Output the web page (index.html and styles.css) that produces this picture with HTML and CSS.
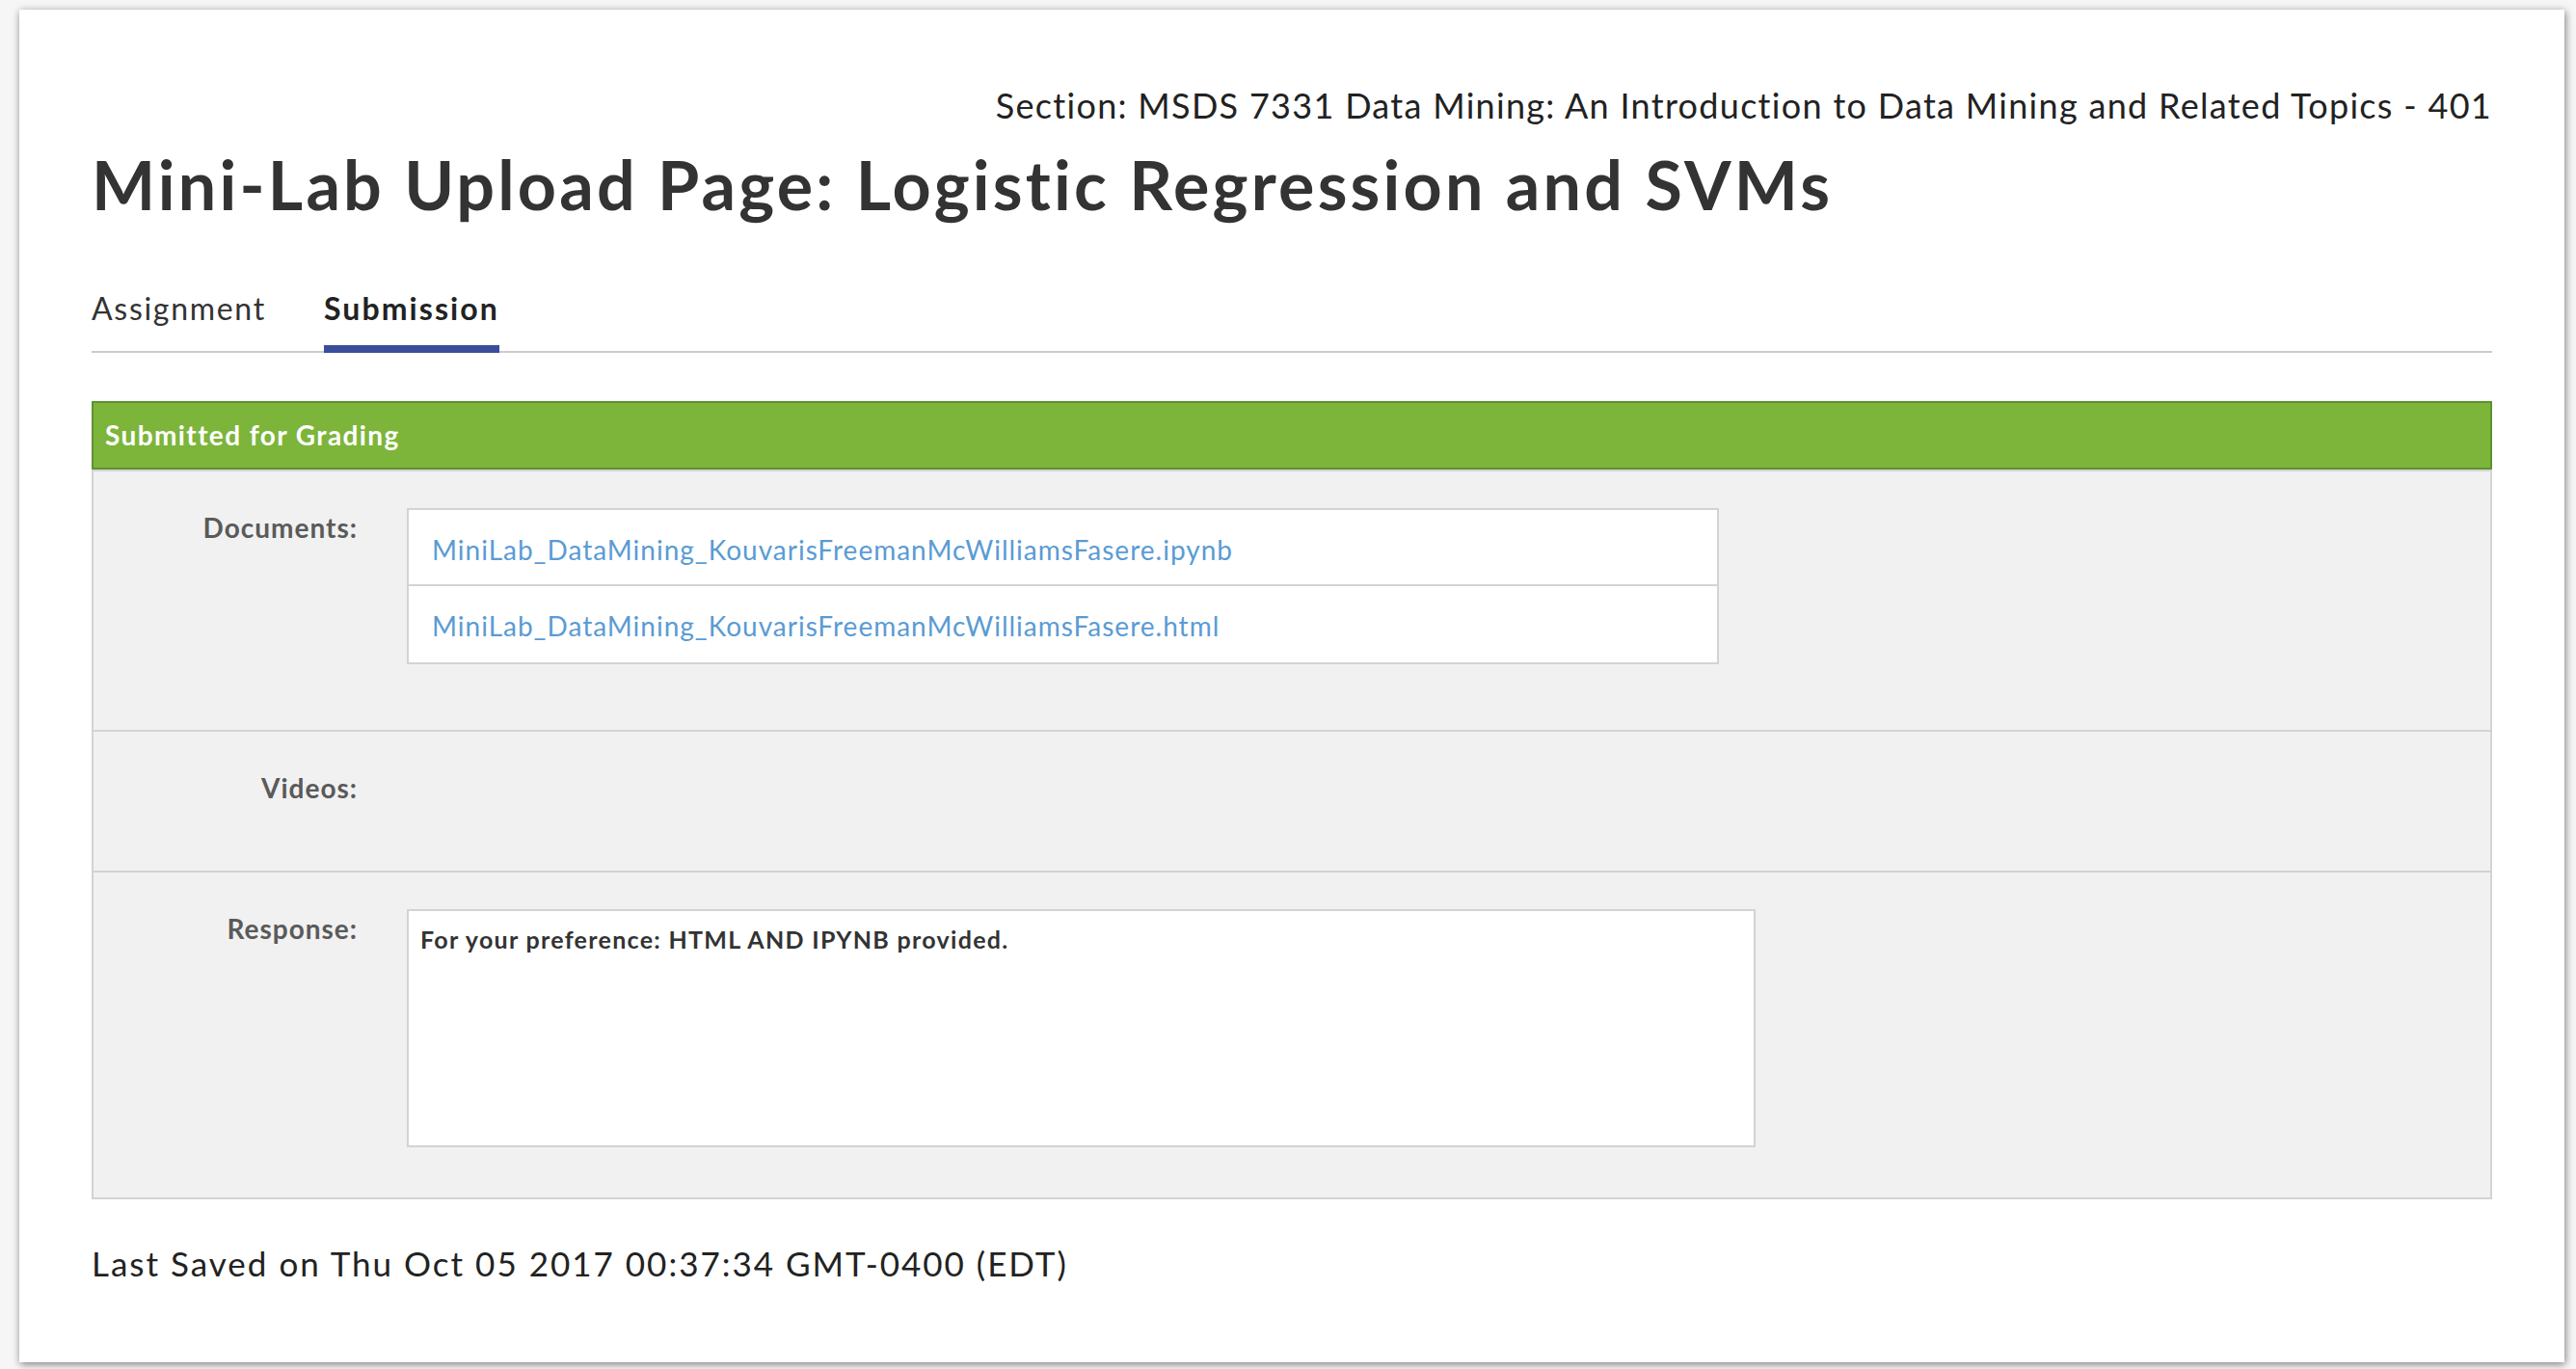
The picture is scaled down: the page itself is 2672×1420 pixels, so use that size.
FILE: index.html
```html
<!DOCTYPE html>
<html lang="en">
<head>
<meta charset="utf-8">
<title>Mini-Lab Upload Page</title>
<link rel="stylesheet" href="styles.css">
</head>
<body>
<div class="card">
  <div class="section-line">Section: MSDS 7331 Data Mining: An Introduction to Data Mining and Related Topics - 401</div>
  <h1 class="page-title">Mini-Lab Upload Page: Logistic Regression and SVMs</h1>
  <nav class="tabs">
    <span class="tab">Assignment</span>
    <span class="tab tab-active">Submission</span>
  </nav>
  <div class="status-panel">
    <div class="status-head">Submitted for Grading</div>
    <div class="status-body">
      <div class="row row-docs">
        <div class="row-label">Documents:</div>
        <div class="row-content">
          <ul class="doc-list">
            <li class="doc-item"><a class="doc-link" href="#">MiniLab_DataMining_KouvarisFreemanMcWilliamsFasere.ipynb</a></li>
            <li class="doc-item"><a class="doc-link" href="#">MiniLab_DataMining_KouvarisFreemanMcWilliamsFasere.html</a></li>
          </ul>
        </div>
      </div>
      <div class="row row-videos">
        <div class="row-label">Videos:</div>
        <div class="row-content"></div>
      </div>
      <div class="row row-response">
        <div class="row-label">Response:</div>
        <div class="row-content">
          <div class="response-box">For your preference: HTML AND IPYNB provided.</div>
        </div>
      </div>
    </div>
  </div>
  <div class="last-saved">Last Saved on Thu Oct 05 2017 00:37:34 GMT-0400 (EDT)</div>
</div>
</body>
</html>
```
FILE: styles.css
```css
html, body {
  margin: 0;
  padding: 0;
}
body {
  background: #f6f6f6;
  padding: 10px 12px 8px 20px;
  font-family: Lato, "Noto Sans", "Liberation Sans", sans-serif;
  color: #222;
}
.card {
  background: #fff;
  box-shadow: 1px 2px 8px rgba(0, 0, 0, 0.5);
  padding: 77px 75px 81px 75px;
}
.section-line {
  font-size: 36px;
  line-height: 44px;
  letter-spacing: 1.3px;
  text-align: right;
  color: #222;
}
.page-title {
  margin: 20px 0 0 0;
  font-size: 70px;
  line-height: 80px;
  letter-spacing: 3.2px;
  font-weight: 700;
  color: #333;
}
.tabs {
  margin-top: 69px;
  display: flex;
  gap: 60px;
  border-bottom: 2px solid #cccccc;
}
.tab {
  font-size: 32px;
  line-height: 40px;
  letter-spacing: 1.7px;
  color: #333;
  padding-bottom: 18px;
  border-bottom: 8px solid transparent;
  margin-bottom: -2px;
}
.tab-active {
  font-weight: 700;
  letter-spacing: 2.1px;
  color: #222;
  border-bottom-color: #3a4e9c;
}
.status-panel {
  margin-top: 50px;
}
.status-head {
  background: #7cb53a;
  border: 2px solid #5f9132;
  color: #fff;
  font-weight: 700;
  font-size: 28px;
  line-height: 67px;
  letter-spacing: 1.4px;
  padding-left: 12px;
}
.status-body {
  background: #f1f1f1;
  border: 2px solid #d3d3d3;
}
.row {
  display: grid;
  grid-template-columns: 274px 1fr;
  column-gap: 51px;
  padding-top: 38px;
  border-bottom: 2px solid #d3d3d3;
}
.row:last-child {
  border-bottom: none;
}
.row-docs { padding-bottom: 68px; }
.row-videos { padding-bottom: 66px; }
.row-response { padding-bottom: 52px; }
.row-label {
  text-align: right;
  font-size: 28px;
  line-height: 40px;
  letter-spacing: 1px;
  font-weight: 700;
  color: #5a5a5a;
}
.doc-list {
  list-style: none;
  margin: 0;
  padding: 0;
  width: 1357px;
  background: #fff;
  border: 2px solid #d3d3d3;
}
.doc-item {
  height: 79px;
  padding-left: 24px;
  box-sizing: border-box;
  padding-top: 4px;
  line-height: 74px;
  border-bottom: 2px solid #d3d3d3;
}
.doc-item:last-child {
  border-bottom: none;
}
.doc-link {
  font-size: 28px;
  letter-spacing: 1px;
  color: #5a9bd4;
  text-decoration: none;
}
.response-box {
  width: 1371px;
  height: 229px;
  padding: 14px 12px 0 12px;
  background: #fff;
  border: 2px solid #d3d3d3;
  font-size: 25px;
  line-height: 30px;
  letter-spacing: 1.3px;
  font-weight: 700;
  color: #333;
}
.last-saved {
  margin-top: 44px;
  font-size: 35px;
  line-height: 44px;
  letter-spacing: 2px;
  color: #222;
}
```
